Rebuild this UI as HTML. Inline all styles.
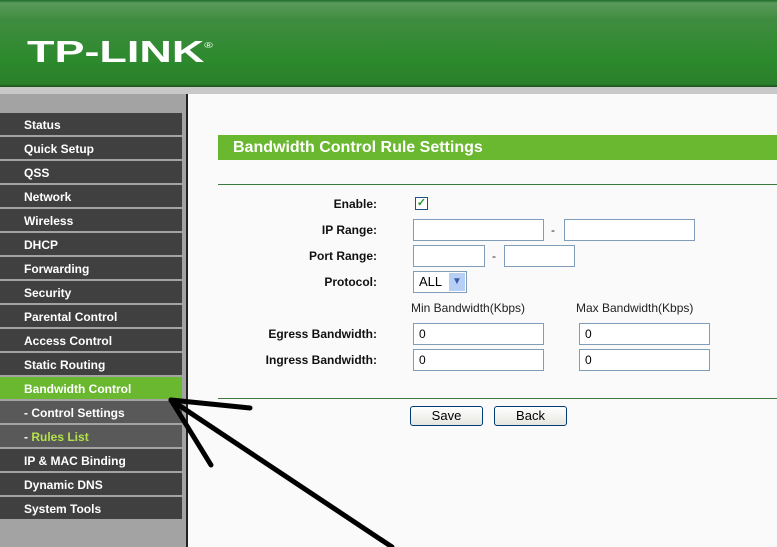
<!DOCTYPE html><html><head><style>
*{margin:0;padding:0;box-sizing:border-box}
body{width:777px;height:547px;overflow:hidden;background:#fafafa;font-family:"Liberation Sans",Arial,sans-serif;position:relative}
.hdr{position:absolute;left:0;top:0;width:777px;height:87px;background:linear-gradient(#1d6b2a 0,#5a9a5a 3px,#3f8c3f 20px,#2d8a2d 60px,#2a7f2a 84px,#1c4f1c 87px)}
.logo{position:absolute;left:27px;top:28px;color:#fff;font:bold 31px "Liberation Sans",sans-serif;transform:scaleX(1.45);transform-origin:left;line-height:36px}
.logo sup{font-size:8px;font-weight:normal;vertical-align:14px}
.strip{position:absolute;left:0;top:87px;width:777px;height:7px;background:#c8c8c8}
.side{position:absolute;left:0;top:94px;width:186px;height:453px;background:#a3a3a3}
.vline{position:absolute;left:186px;top:94px;width:2px;height:453px;background:#222}
.it{position:absolute;left:0;width:182px;height:22px;background:#404040;color:#fff;font:bold 12px "Liberation Sans",sans-serif;line-height:24px;padding-left:24px}
.it.sub{background:#595959}
.it.act{background:#6ab82f}
.title{position:absolute;left:218px;top:135px;width:559px;height:25px;background:#6ab82f;color:#fff;font:bold 16px "Liberation Sans",sans-serif;line-height:25px;padding-left:15px}
.hl{position:absolute;left:218px;width:559px;height:1px;background:#3a7a3a}
.lb{position:absolute;right:400px;font:bold 12px "Liberation Sans",sans-serif;color:#111}
.in{position:absolute;height:22px;border:1px solid #7f9db9;background:#fff;font-size:12px;line-height:20px;padding-left:5px}
.t{position:absolute;font-size:12px;color:#222}
.btn{position:absolute;top:406px;height:20px;border:1px solid #003c74;border-radius:3px;background:linear-gradient(#fff,#e6e6e0);font-size:13px;text-align:center;line-height:18px}
</style></head><body>
<div class="hdr"><div class="logo">TP-LINK<sup>®</sup></div></div>
<div class="strip"></div>
<div class="side"></div>
<div class="vline"></div>
<div class="it" style="top:113px">Status</div>
<div class="it" style="top:137px">Quick Setup</div>
<div class="it" style="top:161px">QSS</div>
<div class="it" style="top:185px">Network</div>
<div class="it" style="top:209px">Wireless</div>
<div class="it" style="top:233px">DHCP</div>
<div class="it" style="top:257px">Forwarding</div>
<div class="it" style="top:281px">Security</div>
<div class="it" style="top:305px">Parental Control</div>
<div class="it" style="top:329px">Access Control</div>
<div class="it" style="top:353px">Static Routing</div>
<div class="it act" style="top:377px">Bandwidth Control</div>
<div class="it sub" style="top:401px">- Control Settings</div>
<div class="it sub" style="top:425px">- <span style="color:#b4e04a">Rules List</span></div>
<div class="it" style="top:449px">IP &amp; MAC Binding</div>
<div class="it" style="top:473px">Dynamic DNS</div>
<div class="it" style="top:497px">System Tools</div>
<div class="title">Bandwidth Control Rule Settings</div>
<div class="hl" style="top:184px"></div>
<div class="hl" style="top:398px"></div>
<div class="lb" style="top:197px">Enable:</div>
<div style="position:absolute;left:415px;top:197px;width:13px;height:13px;border:1px solid #1c5180;background:#fff;color:#21a121;font-size:11px;line-height:11px;text-align:center;font-weight:bold">✓</div>
<div class="lb" style="top:223px">IP Range:</div>
<div class="in" style="left:413px;top:219px;width:131px"></div>
<div class="t" style="left:551px;top:223px">-</div>
<div class="in" style="left:564px;top:219px;width:131px"></div>
<div class="lb" style="top:249px">Port Range:</div>
<div class="in" style="left:413px;top:245px;width:72px"></div>
<div class="t" style="left:492px;top:249px">-</div>
<div class="in" style="left:504px;top:245px;width:71px"></div>
<div class="lb" style="top:275px">Protocol:</div>
<div class="in" style="left:413px;top:271px;width:54px;font-size:13px">ALL<span style="position:absolute;right:1px;top:1px;width:16px;height:18px;background:#b8cff5;color:#3a5ca8;font-size:10px;text-align:center;line-height:18px">▼</span></div>
<div class="t" style="left:411px;top:301px">Min Bandwidth(Kbps)</div>
<div class="t" style="left:576px;top:301px">Max Bandwidth(Kbps)</div>
<div class="lb" style="top:327px">Egress Bandwidth:</div>
<div class="in" style="left:413px;top:323px;width:131px">0</div>
<div class="in" style="left:579px;top:323px;width:131px">0</div>
<div class="lb" style="top:353px">Ingress Bandwidth:</div>
<div class="in" style="left:413px;top:349px;width:131px">0</div>
<div class="in" style="left:579px;top:349px;width:131px">0</div>
<div class="btn" style="left:410px;width:73px">Save</div>
<div class="btn" style="left:494px;width:73px">Back</div>
<svg style="position:absolute;left:0;top:0" width="777" height="547"><g stroke="#000" stroke-width="5" stroke-linecap="round" fill="none"><path d="M171 400 L250 408"/><path d="M171 400 L211 465"/><path d="M171 400 L392 547"/></g></svg>
</body></html>
